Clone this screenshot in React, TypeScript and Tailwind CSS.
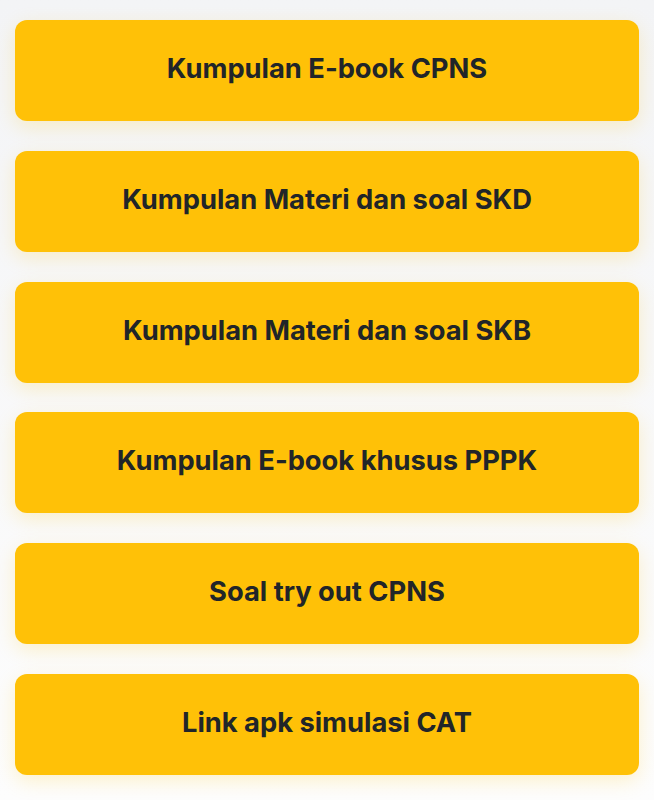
import React from 'react';

const links = [
  'Kumpulan E-book CPNS',
  'Kumpulan Materi dan soal SKD',
  'Kumpulan Materi dan soal SKB',
  'Kumpulan E-book khusus PPPK',
  'Soal try out CPNS',
  'Link apk simulasi CAT',
];

const App: React.FC = () => {
  return (
    <div className="min-h-screen bg-gradient-to-b from-[#f3f4f6] to-[#fdfdfd] px-[15px] pt-[20px] pb-[20px] font-['Inter',sans-serif]">
      <div className="flex flex-col gap-[29.8px]">
        {links.map((label) => (
          <a
            key={label}
            href="#"
            className="flex h-[101px] items-center justify-center rounded-[12px] bg-[#FFC107] pb-[2px] text-center text-[27.3px] font-bold text-[#212529] shadow-[0_6px_20px_rgba(255,193,7,0.2)]"
          >
            {label}
          </a>
        ))}
      </div>
    </div>
  );
};

export default App;
